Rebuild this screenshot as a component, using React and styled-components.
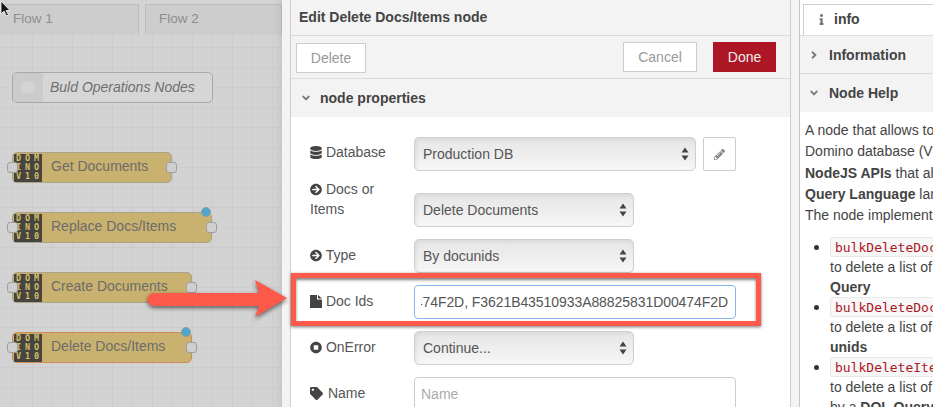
import React from 'react'
import styled, { createGlobalStyle } from 'styled-components'
import {
  FaAngleDown,
  FaAngleRight,
  FaArrowCircleRight,
  FaComment,
  FaDatabase,
  FaInfo,
  FaPencilAlt,
  FaStopCircle,
  FaTag,
} from 'react-icons/fa'

const GlobalStyle = createGlobalStyle`
  html, body {
    margin: 0;
    padding: 0;
    background: #fff;
  }
  * {
    box-sizing: border-box;
  }
`

const Page = styled.div`
  position: relative;
  display: flex;
  width: 933px;
  height: 407px;
  overflow: hidden;
  font-family: "Liberation Sans", Arial, sans-serif;
  font-size: 14px;
  color: #555;
`

/* left side: dimmed flow editor */
const Workspace = styled.div`
  position: relative;
  display: flex;
  flex-direction: column;
  width: 282px;
  flex: none;
  background: #d3d3d3;
`

const TabBar = styled.div`
  display: flex;
  flex: none;
  gap: 6px;
  height: 35px;
  padding-top: 4px;
  background: #d3d3d3;
`

const FlowTab = styled.div`
  width: ${(p) => p.$width}px;
  margin-left: ${(p) => p.$offset || 0}px;
  padding: 6px 0 0 ${(p) => p.$pad}px;
  background: #cdcdcd;
  border: 1px solid #bdbdbd;
  border-bottom: none;
  font-size: 13.5px;
  color: #8e8e8e;
`

const Canvas = styled.div`
  position: relative;
  flex: 1;
  background-color: #d3d3d3;
  background-image:
    linear-gradient(to right, #cccccc 1px, transparent 1px),
    linear-gradient(to bottom, #cccccc 1px, transparent 1px);
  background-size: 20px 20px;
  background-position: 12px 12px;

  &::after {
    content: '';
    position: absolute;
    top: -35px;
    right: 0;
    bottom: 0;
    width: 8px;
    background: linear-gradient(to right, rgba(0, 0, 0, 0), rgba(0, 0, 0, 0.05));
  }
`

const CommentNode = styled.div`
  position: absolute;
  left: 12px;
  top: 37px;
  display: flex;
  align-items: center;
  width: 201px;
  height: 31px;
  border: 1px solid #a9a9a9;
  border-radius: 5px;
  background: #d6d6d6;
  overflow: hidden;
  font-style: italic;
  color: #6f6f6f;
`

const CommentLabel = styled.span`
  margin-bottom: 2px;
`

const CommentIcon = styled.div`
  display: flex;
  align-items: center;
  justify-content: center;
  width: 30px;
  height: 100%;
  margin-right: 7px;
  background: #cbcbcb;
  color: #d4d4d4;
  font-size: 15px;
`

const FlowNode = styled.div`
  position: absolute;
  left: 12px;
  top: ${(p) => p.$top}px;
  display: flex;
  align-items: center;
  width: ${(p) => p.$width}px;
  height: 31px;
  padding: 0 0 3px 38px;
  background: #c9b26f;
  border: 1px solid ${(p) => (p.$selected ? '#d18b57' : '#a9a38c')};
  border-radius: 5px;
  color: #6c6c6a;
`

const Logo = styled.div`
  position: absolute;
  left: 1px;
  top: 1px;
  display: grid;
  grid-template-columns: repeat(3, 9px);
  grid-auto-rows: 9px;
  width: 28px;
  height: 28px;
  background: #45443e;
  color: #d6bc6c;
  font-family: "DejaVu Sans Mono", monospace;
  font-size: 8.5px;
  font-weight: 700;
  line-height: 9.5px;
  text-align: center;
`

const Port = styled.div`
  position: absolute;
  top: 9px;
  ${(p) => (p.$side === 'left' ? 'left: -6px;' : 'right: -6px;')}
  width: 11px;
  height: 11px;
  background: #cfcfcf;
  border: 1px solid #9e9e9e;
  border-radius: 3px;
`

const Badge = styled.div`
  position: absolute;
  top: -6px;
  right: 0;
  width: 10px;
  height: 10px;
  border-radius: 50%;
  background: #52a6c9;
  border: 1px solid #8f9fa5;
`

/* middle: edit dialog */
const Tray = styled.div`
  display: flex;
  flex-direction: column;
  width: 518px;
  flex: none;
  padding-left: 8px;
  padding-right: 8px;
  background: #f3f3f3;
  border-right: 1px solid #c6c6c6;
`

const TrayInner = styled.div`
  display: flex;
  flex-direction: column;
  flex: 1;
  min-height: 0;
  border-left: 1px solid #cfcfcf;
  border-right: 1px solid #cfcfcf;
  background: #fff;
`

const TrayTitle = styled.div`
  flex: none;
  height: 36px;
  padding: 9px 0 0 8px;
  background: #f3f3f3;
  border-bottom: 1px solid #dcdcdc;
  font-weight: 700;
  color: #444;
`

const Toolbar = styled.div`
  display: flex;
  flex: none;
  align-items: flex-start;
  height: 43px;
  padding: 6px 14px 0 5px;
  background: #f3f3f3;
  border-bottom: 1px solid #dcdcdc;
`

const Button = styled.button`
  width: ${(p) => p.$width}px;
  height: 30px;
  margin-top: ${(p) => p.$top || 0}px;
  margin-right: ${(p) => p.$gap || 0}px;
  background: ${(p) => (p.$primary ? '#ad1625' : '#fff')};
  border: 1px solid ${(p) => (p.$primary ? '#ad1625' : '#ccc')};
  font-family: inherit;
  font-size: 14px;
  color: ${(p) => (p.$primary ? '#eee' : '#999')};
  padding: 0;
`

const Spacer = styled.div`
  flex: 1;
`

const SectionHeader = styled.div`
  display: flex;
  align-items: center;
  height: 38px;
  padding-left: ${(p) => p.$pad}px;
  background: #f3f3f3;
  font-weight: 700;
  color: #444;
  flex: none;
  border-bottom: ${(p) => (p.$ruled ? '1px solid #dcdcdc' : 'none')};
`

const Chevron = styled.span`
  display: inline-flex;
  justify-content: center;
  width: 14px;
  margin-right: ${(p) => p.$gap}px;
  font-size: 12px;
  color: #777;
`

const Form = styled.div`
  padding: 20px 0 0 19px;
`

const Row = styled.div`
  display: flex;
  align-items: flex-start;
  margin-top: ${(p) => p.$shift || 0}px;
  margin-bottom: 12px;
`

const Label = styled.div`
  width: 104px;
  flex: none;
  padding-top: ${(p) => p.$pad ?? 6}px;
  line-height: 20px;
  color: #555;

  svg {
    width: 12px;
    height: 13px;
    vertical-align: -2px;
    color: #444;
  }
`

const TagIcon = styled(FaTag)`
  && {
    width: 13px;
    margin-right: 1px;
  }
`

const Select = styled.div`
  display: flex;
  align-items: center;
  justify-content: space-between;
  width: ${(p) => p.$width}px;
  height: 34px;
  margin-top: ${(p) => p.$top || 0}px;
  padding: 0 6px 0 8px;
  background: linear-gradient(to bottom, #e6e6e6, #efefef 60%, #f7f7f7);
  border: 1px solid #cfcfcf;
  border-radius: 5px;
  box-shadow: inset 2px 2px 4px rgba(0, 0, 0, 0.06);
  color: #555;
`

const IconButton = styled.div`
  display: flex;
  align-items: center;
  justify-content: center;
  width: 33px;
  height: 34px;
  margin-left: 7px;
  background: #fff;
  border: 1px solid #ccc;
  border-radius: 2px;
  color: #888;
  font-size: 11px;
`

const TextInput = styled.div`
  width: 322px;
  height: 34px;
  padding: 0 7px 0 6px;
  display: flex;
  align-items: center;
  background: #fff;
  border: 1px solid ${(p) => (p.$focused ? '#86b4ee' : '#ccc')};
  border-radius: 4px;
  color: ${(p) => (p.$placeholder ? '#aaa' : '#555')};
`

const InputValue = styled.div`
  display: flex;
  justify-content: flex-end;
  flex: 1;
  overflow: hidden;
  white-space: nowrap;
  letter-spacing: -0.07px;
`

/* right side: info sidebar */
const Sidebar = styled.div`
  flex: 1;
  min-width: 0;
  display: flex;
  flex-direction: column;
  background: #fff;
`

const SideTabs = styled.div`
  flex: none;
  height: 36px;
  padding: 4px 0 0 3px;
  background: #fff;
  border-bottom: 1px solid #dcdcdc;
`

const SideTab = styled.div`
  display: flex;
  align-items: center;
  height: 31px;
  padding: 0 0 2px 12px;
  background: #fff;
  border: 1px solid #cfcfcf;
  border-right: none;
  border-bottom: none;
  font-weight: 700;
  color: #444;

  svg {
    margin-right: 7px;
    font-size: 11px;
    color: #777;
  }
`

const Help = styled.div`
  padding: 8px 0 0 5px;
  overflow: hidden;
  white-space: nowrap;
  color: #444;
  line-height: 21.3px;
`

const HelpLine = styled.div``

const Steps = styled.ul`
  margin: 11px 0 0;
  padding: 0 0 0 25px;
  line-height: 20px;
  list-style: none;
`

const Step = styled.li`
  position: relative;

  &::before {
    content: '';
    position: absolute;
    left: -16px;
    top: 8px;
    width: 5px;
    height: 5px;
    border-radius: 50%;
    background: #333;
  }
`

const Code = styled.code`
  display: inline-block;
  height: 20px;
  padding: 0 4px;
  background: #f7f7f7;
  border: 1px solid #e8e8e8;
  border-radius: 2px;
  font-family: "DejaVu Sans Mono", monospace;
  font-size: 13px;
  line-height: 19px;
  color: #ad1625;
`

/* annotation drawn on top of the screenshot */
const Highlight = styled.div`
  position: absolute;
  left: 291px;
  top: 273px;
  width: 470px;
  height: 53px;
  border: 5px solid #fd5a4b;
  box-shadow: 0 1px 3px rgba(0, 0, 0, 0.55), inset 0 2px 3px rgba(0, 0, 0, 0.5);
  pointer-events: none;
`

const Overlay = styled.svg`
  position: absolute;
  left: ${(p) => p.$left}px;
  top: ${(p) => p.$top}px;
  overflow: visible;
`

const StepperIcon = () => (
  <svg width="8" height="14" viewBox="0 0 8 14">
    <path d="M4 0.5 L7.5 5.5 H0.5 Z M4 13.5 L0.5 8.5 H7.5 Z" fill="#444" />
  </svg>
)

const FileIcon = () => (
  <svg viewBox="0 0 12 13">
    <path d="M0 0 H7 V4.5 H12 V13 H0 Z M8 0 L12 3.5 H8 Z" fill="currentColor" />
  </svg>
)

const DominoNode = ({ top, width, label, changed, selected }) => (
  <FlowNode $top={top} $width={width} $selected={selected}>
    <Logo>
      {'DOMINOV10'.split('').map((c, i) => (
        <span key={i}>{c}</span>
      ))}
    </Logo>
    <Port $side="left" />
    {label}
    <Port $side="right" />
    {changed && <Badge />}
  </FlowNode>
)

const App = () => (
  <Page>
    <GlobalStyle />
    <Workspace>
      <TabBar>
        <FlowTab $width={140} $offset={-1} $pad={13}>Flow 1</FlowTab>
        <FlowTab $width={137} $pad={13}>Flow 2</FlowTab>
      </TabBar>
      <Canvas>
        <CommentNode>
          <CommentIcon><FaComment /></CommentIcon>
          <CommentLabel>Buld Operations Nodes</CommentLabel>
        </CommentNode>
        <DominoNode top={117} width={160} label="Get Documents" />
        <DominoNode top={177} width={200} label="Replace Docs/Items" changed />
        <DominoNode top={237} width={180} label="Create Documents" />
        <DominoNode top={297} width={180} label="Delete Docs/Items" changed selected />
      </Canvas>
    </Workspace>

    <Tray>
      <TrayInner>
        <TrayTitle>Edit Delete Docs/Items node</TrayTitle>
        <Toolbar>
          <Button $width={70} $top={1}>Delete</Button>
          <Spacer />
          <Button $width={74} $gap={16}>Cancel</Button>
          <Button $width={63} $primary>Done</Button>
        </Toolbar>
        <SectionHeader $pad={8}>
          <Chevron $gap={7}><FaAngleDown /></Chevron>
          node properties
        </SectionHeader>
        <Form>
          <Row>
            <Label $pad={5}><FaDatabase /> Database</Label>
            <Select $width={282}>Production DB<StepperIcon /></Select>
            <IconButton><FaPencilAlt /></IconButton>
          </Row>
          <Row $shift={-4}>
            <Label $pad={0}><FaArrowCircleRight /> Docs or<br />Items</Label>
            <Select $width={220} $top={14}>Delete Documents<StepperIcon /></Select>
          </Row>
          <Row>
            <Label><FaArrowCircleRight /> Type</Label>
            <Select $width={220}>By docunids<StepperIcon /></Select>
          </Row>
          <Row>
            <Label><FileIcon /> Doc Ids</Label>
            <TextInput $focused>
              <InputValue>
                <span>F3621B43510933A88825831D00474F2D, F3621B43510933A88825831D00474F2D</span>
              </InputValue>
            </TextInput>
          </Row>
          <Row>
            <Label><FaStopCircle /> OnError</Label>
            <Select $width={220}>Continue...<StepperIcon /></Select>
          </Row>
          <Row>
            <Label><TagIcon /> Name</Label>
            <TextInput $placeholder>Name</TextInput>
          </Row>
        </Form>
      </TrayInner>
    </Tray>

    <Sidebar>
      <SideTabs>
        <SideTab><FaInfo />info</SideTab>
      </SideTabs>
      <SectionHeader $pad={7} $ruled>
        <Chevron $gap={8}><FaAngleRight /></Chevron>
        Information
      </SectionHeader>
      <SectionHeader $pad={7}>
        <Chevron $gap={8}><FaAngleDown /></Chevron>
        Node Help
      </SectionHeader>
      <Help>
        <HelpLine>A node that allows to perform</HelpLine>
        <HelpLine>Domino database (V10)</HelpLine>
        <HelpLine><b>NodeJS APIs</b> that allow</HelpLine>
        <HelpLine><b>Query Language</b> language</HelpLine>
        <HelpLine>The node implements</HelpLine>
        <Steps>
          <Step>
            <Code>bulkDeleteDocuments</Code>
            <br />to delete a list of
            <br /><b>Query</b>
          </Step>
          <Step>
            <Code>bulkDeleteDocuments</Code>
            <br />to delete a list of
            <br /><b>unids</b>
          </Step>
          <Step>
            <Code>bulkDeleteItems</Code>
            <br />to delete a list of
            <br />by a <b>DQL Query</b>
          </Step>
        </Steps>
      </Help>
    </Sidebar>

    <Highlight />
    <Overlay $left={146} $top={278} width="144" height="42" viewBox="0 0 144 42">
      <path
        d="M8 15 H113 L109 2 L141 20 L109 39 L113 28 H8 A6.5 6.5 0 0 1 8 15 Z"
        fill="#fd5a4b"
        style={{ filter: 'drop-shadow(0 2px 2px rgba(0,0,0,0.55))' }}
      />
    </Overlay>
    <Overlay $left={0} $top={0} width="12" height="18" viewBox="0 0 12 18">
      <path d="M1 1 V14 L4 11 L6.5 16 L8.5 15 L6 10.5 H10 Z" fill="#111" stroke="#fff" strokeWidth="0.8" />
    </Overlay>
  </Page>
)

export default App
